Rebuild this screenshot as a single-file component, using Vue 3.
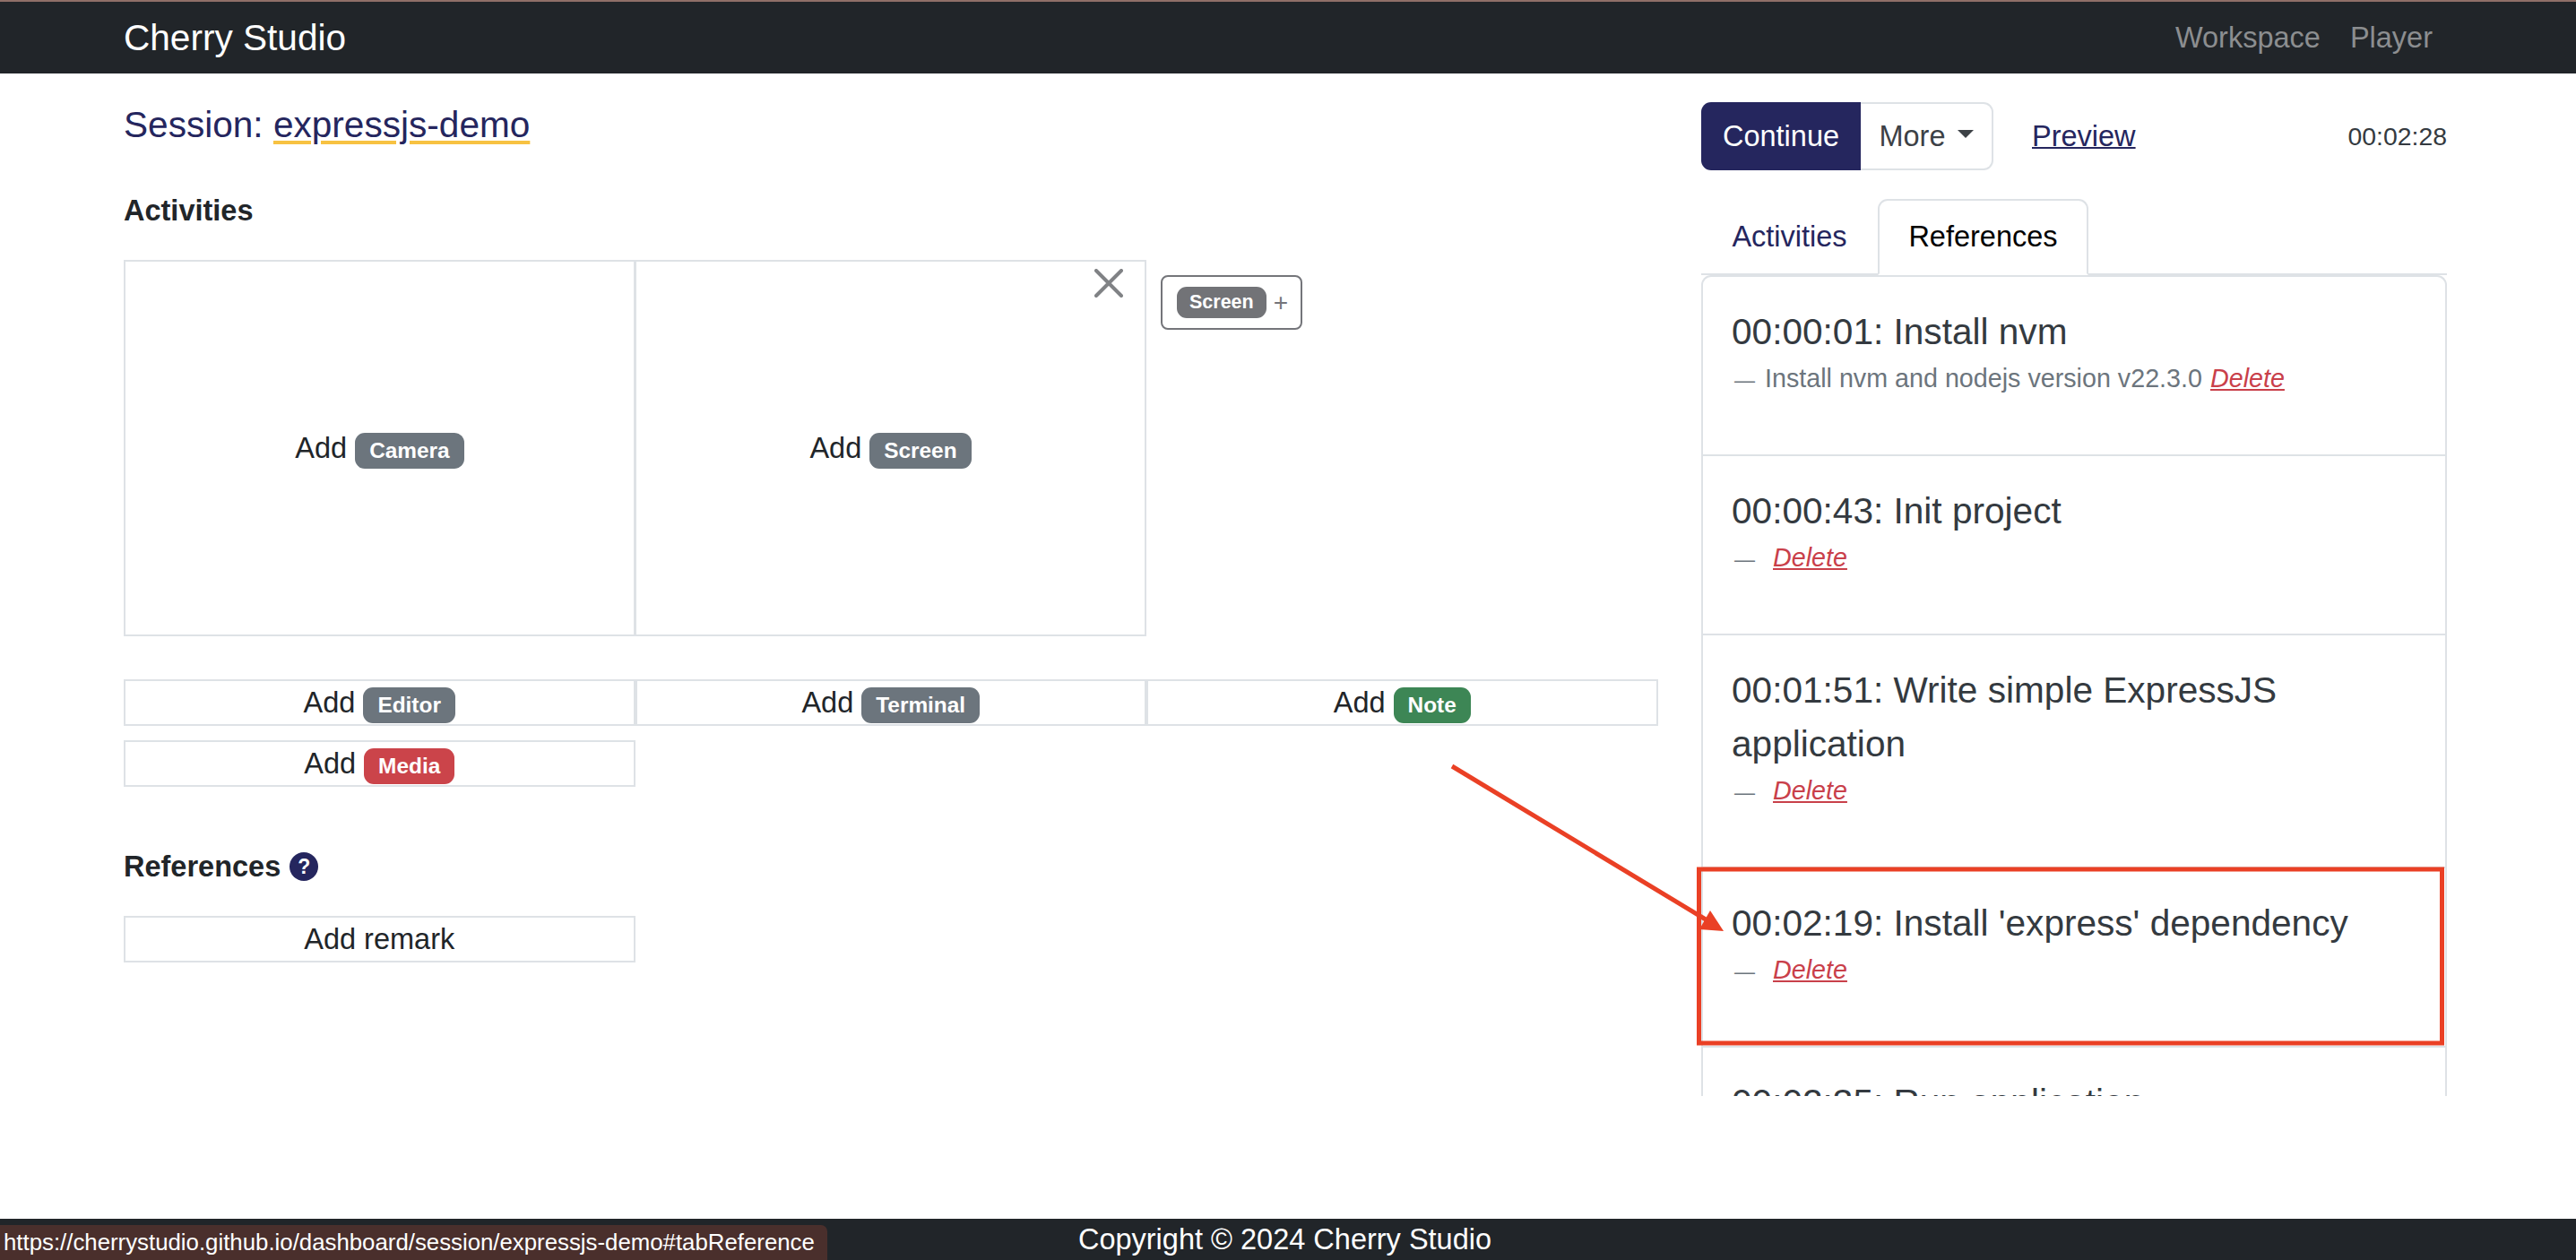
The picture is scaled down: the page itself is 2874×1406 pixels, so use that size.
<script setup>
const items = [
  { title: '00:00:01: Install nvm', note: 'Install nvm and nodejs version v22.3.0' },
  { title: '00:00:43: Init project', note: '' },
  { title: '00:01:51: Write simple ExpressJS application', note: '' },
  { title: "00:02:19: Install 'express' dependency", note: '' },
  { title: '00:02:35: Run application', note: '' },
]
const strips = [
  { label: 'Editor', tone: 'gray' },
  { label: 'Terminal', tone: 'gray' },
  { label: 'Note', tone: 'green' },
  { label: 'Media', tone: 'red' },
]
</script>

<template>
  <div class="page">
    <header class="navbar">
      <span class="brand">Cherry Studio</span>
      <nav class="nav"><a>Workspace</a><a>Player</a></nav>
    </header>

    <main class="main">
      <section class="left">
        <h1 class="session">Session: <a>expressjs-demo</a></h1>
        <h2 class="heading activities">Activities</h2>
        <div class="stage">
          <div class="pane">Add <span class="badge gray">Camera</span></div>
          <div class="pane second">
            Add <span class="badge gray">Screen</span>
            <svg class="close" viewBox="0 0 32 32" aria-label="Close">
              <path d="M2 2 L30 30 M30 2 L2 30" stroke="#808285" stroke-width="4" stroke-linecap="round" fill="none" />
            </svg>
          </div>
          <div class="chip"><span class="badge small gray">Screen</span><span class="plus">+</span></div>
        </div>
        <div class="strips">
          <div v-for="s in strips" :key="s.label" class="strip">Add <span class="badge" :class="s.tone">{{ s.label }}</span></div>
        </div>
        <h2 class="heading refs">References <span class="help">?</span></h2>
        <div class="strips"><div class="strip remark">Add remark</div></div>
      </section>

      <aside class="right">
        <div class="toolbar">
          <div class="group">
            <button class="btn primary">Continue</button>
            <button class="btn more">More<i class="caret"></i></button>
          </div>
          <a class="preview">Preview</a>
          <span class="time">00:02:28</span>
        </div>
        <div class="tabs">
          <a class="tab">Activities</a>
          <a class="tab active">References</a>
        </div>
        <div class="list">
          <div v-for="it in items" :key="it.title" class="item">
            <div class="title">{{ it.title }}</div>
            <div class="sub"><span class="dash">—</span><span v-if="it.note" class="note">{{ it.note }}</span><a class="del">Delete</a></div>
          </div>
        </div>
      </aside>
    </main>

    <footer class="footer">Copyright © 2024 Cherry Studio</footer>
    <div class="status">https://cherrystudio.github.io/dashboard/session/expressjs-demo#tabReference</div>

    <svg class="annot" viewBox="0 0 2874 1406" aria-hidden="true">
      <path d="M1620 855 L1903 1026" stroke="#ea4025" stroke-width="5" fill="none" />
      <path d="M1923 1039 L1896 1037 L1908 1016 Z" fill="#ea4025" />
      <rect x="1895.5" y="970" width="829" height="194" fill="none" stroke="#ea4025" stroke-width="5" />
    </svg>
  </div>
</template>

<style>
html, body { margin: 0; background: #fff; }
</style>

<style scoped>
.page {
  position: relative;
  width: 2874px;
  height: 1406px;
  overflow: hidden;
  display: flex;
  flex-direction: column;
  font-family: "Liberation Sans", Arial, sans-serif;
  font-size: 32.5px;
  color: #212529;
  background: #fff;
}
.navbar {
  height: 80px;
  flex: none;
  border-top: 2px solid #8f6f68;
  background: #212529;
  display: flex;
  align-items: center;
  justify-content: space-between;
  padding: 0 160px 0 138px;
}
.brand { color: #fff; font-size: 40.6px; }
.nav { display: flex; gap: 33px; color: #8c8e90; font-size: 32.5px; }

.main {
  flex: 1;
  min-height: 0;
  display: grid;
  grid-template-columns: 1711px 832px;
  column-gap: 49px;
  padding-left: 138px;
}
.left { display: flex; flex-direction: column; }
.session {
  margin: 33px 0 0;
  font-size: 40.6px;
  font-weight: 400;
  line-height: 48px;
  color: #25265e;
}
.session a {
  text-decoration: underline #f7c242 4px;
  text-underline-offset: 4px;
}
.heading { margin: 0; font-size: 32.5px; font-weight: 700; line-height: 40px; }
.activities { margin-top: 52px; }
.stage { display: flex; align-items: flex-start; margin-top: 35px; }
.pane {
  box-sizing: border-box;
  width: 571px;
  height: 420px;
  border: 2px solid #dee2e6;
  display: flex;
  align-items: center;
  justify-content: center;
  gap: 9px;
  position: relative;
}
.second { margin-left: -1px; }
.close { position: absolute; top: 8px; right: 24px; width: 32px; height: 32px; }
.chip {
  box-sizing: border-box;
  margin: 17px 0 0 16px;
  width: 158px;
  height: 61px;
  border: 2px solid #74757a;
  border-radius: 8px;
  display: flex;
  align-items: center;
  padding-left: 16px;
  gap: 8px;
}
.plus { color: #74757a; font-size: 28px; }
.badge {
  display: inline-flex;
  align-items: center;
  height: 40px;
  padding: 0 16px;
  border-radius: 11px;
  color: #fff;
  font-size: 24.4px;
  font-weight: 700;
  margin-top: 6px;
}
.badge.small { height: 35px; font-size: 21.5px; border-radius: 11px; padding: 0 14px; margin: 0; }
.gray { background: #6c757d; }
.chip .gray { background: #727377; }
.green { background: #3d8655; }
.red { background: #cb444a; }
.strips {
  display: grid;
  grid-template-columns: repeat(3, 570.5px);
  row-gap: 16px;
  margin-top: 48px;
}
.strip {
  box-sizing: border-box;
  height: 52px;
  border: 2px solid #dee2e6;
  display: flex;
  align-items: center;
  justify-content: center;
  gap: 9px;
}
.refs { margin-top: 69px; display: flex; align-items: center; gap: 10px; }
.refs + .strips { margin-top: 35px; }
.help {
  width: 32px;
  height: 32px;
  border-radius: 50%;
  background: #25265e;
  color: #fff;
  font-size: 23px;
  display: flex;
  align-items: center;
  justify-content: center;
}

.right { display: flex; flex-direction: column; min-height: 0; }
.toolbar { display: flex; align-items: center; margin-top: 32px; height: 76px; }
.group { display: flex; }
.btn {
  box-sizing: border-box;
  height: 76px;
  font: inherit;
  padding: 0;
  display: flex;
  align-items: center;
  justify-content: center;
}
.primary {
  width: 178px;
  border: 0;
  border-radius: 11px 0 0 11px;
  background: #25265e;
  color: #fff;
}
.more {
  width: 148px;
  gap: 13px;
  border: 2px solid #dee2e6;
  border-left: 0;
  border-radius: 0 11px 11px 0;
  background: #fff;
  color: #3c4146;
}
.caret {
  width: 0;
  height: 0;
  margin-top: -6px;
  border-left: 9px solid transparent;
  border-right: 9px solid transparent;
  border-top: 9px solid #3c4146;
}
.preview {
  margin-left: 43px;
  color: #25265e;
  text-decoration: underline;
  text-decoration-thickness: 2px;
}
.time { margin-left: auto; font-size: 28.4px; color: #343a40; }
.tabs {
  display: flex;
  margin-top: 32px;
  height: 83px;
  border-bottom: 2px solid #dee2e6;
}
.tab {
  box-sizing: border-box;
  height: 85px;
  display: flex;
  align-items: center;
  justify-content: center;
  color: #25265e;
  width: 197px;
}
.tab.active {
  width: 235px;
  border: 2px solid #dee2e6;
  border-bottom-color: #fff;
  border-radius: 11px 11px 0 0;
  color: #000;
}
.list {
  box-sizing: border-box;
  height: 916px;
  overflow: hidden;
  border: 2px solid #dee2e6;
  border-bottom: 0;
  border-radius: 11px 11px 0 0;
}
.item {
  box-sizing: border-box;
  padding: 31px 32px 65px;
  border-bottom: 2px solid #dee2e6;
}
.title { font-size: 40.6px; line-height: 60px; color: #343a40; }
.sub { display: flex; align-items: baseline; height: 40px; margin-top: 2px; font-size: 28.7px; line-height: 40px; color: #6c757d; }
.dash { font-size: 23px; width: 46px; flex: none; padding-left: 3px; box-sizing: border-box; }
.note { margin-right: 9px; margin-left: -9px; }
.del { color: #c9404a; font-style: italic; text-decoration: underline; }

.footer {
  flex: none;
  height: 46px;
  box-sizing: border-box;
  padding-right: 7px;
  background: #212529;
  color: #fff;
  display: flex;
  align-items: center;
  justify-content: center;
  font-size: 32.5px;
}
.status {
  position: absolute;
  left: 0;
  bottom: 0;
  width: 923px;
  height: 39px;
  box-sizing: border-box;
  padding-left: 4px;
  display: flex;
  align-items: center;
  background: #4a2f2c;
  color: #fff;
  font-size: 25.8px;
  border-radius: 0 7px 0 0;
  white-space: nowrap;
}
.annot { position: absolute; inset: 0; width: 2874px; height: 1406px; pointer-events: none; }
</style>
